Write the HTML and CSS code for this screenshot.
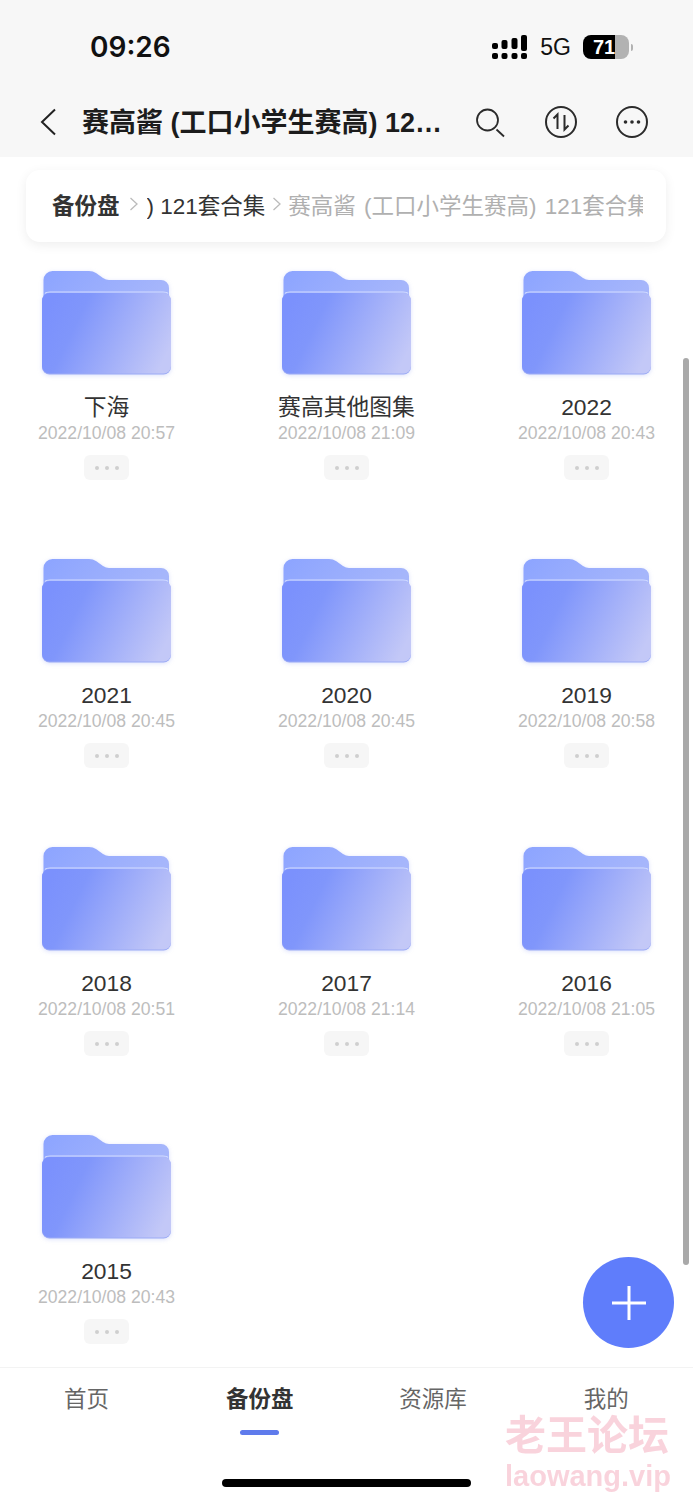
FILE: index.html
```html
<!DOCTYPE html>
<html lang="zh-CN">
<head>
  <meta charset="UTF-8">
  <meta name="viewport" content="width=device-width, initial-scale=1.0">
  <title>备份盘</title>
  <link rel="stylesheet" href="styles.css">
</head>
<body>
  <svg class="defs" width="0" height="0" aria-hidden="true">
    <defs>
      <linearGradient id="folderBack" x1="0" y1="0" x2="1" y2="0.3">
        <stop offset="0" stop-color="#8ca4ff"/>
        <stop offset="1" stop-color="#a6b6fb"/>
      </linearGradient>
      <linearGradient id="folderFront" x1="0" y1="0.35" x2="1" y2="0.65">
        <stop offset="0" stop-color="#7b91fd"/>
        <stop offset="0.25" stop-color="#8096fb"/>
        <stop offset="1" stop-color="#c3c8f7"/>
      </linearGradient>
      <symbol id="folder" viewBox="0 0 130 106">
        <path d="M1.500 9a9 9 0 0 1 9-9H47q4 0 7 2l7 5q3 2 6 2h52a8 8 0 0 1 8 8V40H1.500Z" fill="url(#folderBack)"/>
        <rect x="0" y="22.500" width="129" height="81" rx="7.500" fill="#9cabf5"/>
        <rect x="0" y="22" width="129" height="80.500" rx="7.500" fill="url(#folderFront)"/>
        <path d="M3 22.500Q4 21 8 21H121q4 0 5 1.500" fill="none" stroke="#d4dcff" stroke-width="1.200"/>
      </symbol>
    </defs>
  </svg>

  <div class="page">
    <header class="top">
      <div class="status">
        <span class="clock">09:26</span>
        <div class="status-right">
          <svg class="signal" width="36" height="24" viewBox="0 0 36 24">
            <g fill="#000">
              <rect x="0" y="8" width="6" height="6" rx="2"/>
              <rect x="9.500" y="5" width="6" height="9" rx="2"/>
              <rect x="19.500" y="3" width="6" height="11" rx="2"/>
              <rect x="29" y="0" width="6" height="16" rx="2"/>
              <rect x="0" y="18" width="6" height="6" rx="2"/>
              <rect x="9.500" y="18" width="6" height="6" rx="2"/>
              <rect x="19.500" y="18" width="6" height="6" rx="2"/>
              <rect x="29" y="18" width="6" height="6" rx="2"/>
            </g>
          </svg>
          <span class="net">5G</span>
          <div class="battery"><span>71</span></div>
          <i class="battery-nub"></i>
        </div>
      </div>
      <nav class="navbar">
        <svg class="back" width="18" height="28" viewBox="0 0 18 28">
          <path d="M16 1.500 3 14l13 12.500" fill="none" stroke="#222" stroke-width="2"/>
        </svg>
        <h1 class="title">赛高酱 (工口小学生赛高) 121套合集</h1>
        <div class="nav-icons">
          <svg width="32" height="32" viewBox="0 0 32 32">
            <circle cx="13.500" cy="14" r="10.500" fill="none" stroke="#2b2b2b" stroke-width="1.800"/>
            <path d="M22.500 23.500 30 30.500" stroke="#2b2b2b" stroke-width="1.800"/>
          </svg>
          <svg width="32" height="32" viewBox="0 0 32 32">
            <circle cx="16" cy="16" r="15" fill="none" stroke="#2b2b2b" stroke-width="2"/>
            <path d="M8.500 12.500 12.500 8.500V23M19.500 9V23.500L23.500 19.500" fill="none" stroke="#2b2b2b" stroke-width="2"/>
          </svg>
          <svg width="32" height="32" viewBox="0 0 32 32">
            <circle cx="16" cy="16" r="15" fill="none" stroke="#2b2b2b" stroke-width="2"/>
            <circle cx="9.500" cy="16" r="1.800" fill="#2b2b2b"/>
            <circle cx="16" cy="16" r="1.800" fill="#2b2b2b"/>
            <circle cx="22.500" cy="16" r="1.800" fill="#2b2b2b"/>
          </svg>
        </div>
      </nav>
    </header>

    <main class="content">
      <div class="crumbs">
        <span class="crumb-root">备份盘</span>
        <svg class="crumb-arrow first" width="10" height="16" viewBox="0 0 10 16">
          <path d="M1.500 2 8 8l-6.500 6" fill="none" stroke="#bbb" stroke-width="1.300"/>
        </svg>
        <div class="crumb-track">
          <span class="crumb-mid">) 121套合集</span>
          <svg class="crumb-arrow" width="10" height="16" viewBox="0 0 10 16">
            <path d="M1.500 2 8 8l-6.500 6" fill="none" stroke="#bbb" stroke-width="1.300"/>
          </svg>
          <span class="crumb-last">赛高酱 (工口小学生赛高) 121套合集</span>
        </div>
      </div>

      <div class="grid">
        <div class="cell">
          <svg class="folder"><use href="#folder"/></svg>
          <div class="name">下海</div>
          <div class="date">2022/10/08 20:57</div>
          <div class="more"><i></i><i></i><i></i></div>
        </div>
        <div class="cell">
          <svg class="folder"><use href="#folder"/></svg>
          <div class="name">赛高其他图集</div>
          <div class="date">2022/10/08 21:09</div>
          <div class="more"><i></i><i></i><i></i></div>
        </div>
        <div class="cell">
          <svg class="folder"><use href="#folder"/></svg>
          <div class="name">2022</div>
          <div class="date">2022/10/08 20:43</div>
          <div class="more"><i></i><i></i><i></i></div>
        </div>
        <div class="cell">
          <svg class="folder"><use href="#folder"/></svg>
          <div class="name">2021</div>
          <div class="date">2022/10/08 20:45</div>
          <div class="more"><i></i><i></i><i></i></div>
        </div>
        <div class="cell">
          <svg class="folder"><use href="#folder"/></svg>
          <div class="name">2020</div>
          <div class="date">2022/10/08 20:45</div>
          <div class="more"><i></i><i></i><i></i></div>
        </div>
        <div class="cell">
          <svg class="folder"><use href="#folder"/></svg>
          <div class="name">2019</div>
          <div class="date">2022/10/08 20:58</div>
          <div class="more"><i></i><i></i><i></i></div>
        </div>
        <div class="cell">
          <svg class="folder"><use href="#folder"/></svg>
          <div class="name">2018</div>
          <div class="date">2022/10/08 20:51</div>
          <div class="more"><i></i><i></i><i></i></div>
        </div>
        <div class="cell">
          <svg class="folder"><use href="#folder"/></svg>
          <div class="name">2017</div>
          <div class="date">2022/10/08 21:14</div>
          <div class="more"><i></i><i></i><i></i></div>
        </div>
        <div class="cell">
          <svg class="folder"><use href="#folder"/></svg>
          <div class="name">2016</div>
          <div class="date">2022/10/08 21:05</div>
          <div class="more"><i></i><i></i><i></i></div>
        </div>
        <div class="cell">
          <svg class="folder"><use href="#folder"/></svg>
          <div class="name">2015</div>
          <div class="date">2022/10/08 20:43</div>
          <div class="more"><i></i><i></i><i></i></div>
        </div>
      </div>
    </main>

    <footer class="tabbar">
      <div class="tabs">
        <div class="tab">首页</div>
        <div class="tab active">备份盘</div>
        <div class="tab">资源库</div>
        <div class="tab">我的</div>
      </div>
      <div class="home-bar"></div>
    </footer>

    <div class="scrollbar"></div>
    <button class="fab" type="button" aria-label="新建">
      <svg width="36" height="36" viewBox="0 0 36 36">
        <path d="M1 18H35M18 1V35" stroke="#fff" stroke-width="3"/>
      </svg>
    </button>
    <div class="watermark">
      <div class="wm-cn">老王论坛</div>
      <div class="wm-en">laowang.vip</div>
    </div>
  </div>
</body>
</html>
```

FILE: styles.css
```css
html, body { margin: 0; padding: 0; }
body {
  background-color: #ffffff;
  color: #222222;
  font-family: "Liberation Sans", "Noto Sans CJK SC", sans-serif;
}
.defs { position: absolute; }

.page {
  position: relative;
  display: flex;
  flex-direction: column;
  width: 693px;
  height: 1500px;
  overflow: hidden;
}

/* top area */
.top { flex: none; height: 157px; background-color: #f7f7f7; }
.status {
  display: flex;
  align-items: center;
  justify-content: space-between;
  height: 94px;
  padding: 0 60px 0 90px;
}
.clock { font-family: "Inter", sans-serif; font-size: 28px; font-weight: 600; color: #111111; }
.status-right { display: flex; align-items: center; }
.signal { margin-right: 12px; }
.net { font-size: 23px; color: #111111; margin-right: 12px; }
.battery {
  width: 46px;
  height: 24px;
  border-radius: 8px;
  background: linear-gradient(90deg, #000000 70%, #b2b2b2 70%);
  color: #ffffff;
  font-size: 20px;
  font-weight: 700;
  line-height: 24px;
  text-indent: 10px;
}
.battery-nub {
  width: 2px;
  height: 7px;
  margin-left: 2px;
  border-radius: 0 2px 2px 0;
  background-color: #b2b2b2;
}

.navbar {
  display: flex;
  align-items: center;
  height: 56px;
  padding-left: 39px;
}
.back { flex: none; margin-right: 25px; }
.title {
  width: 368px;
  margin: 0;
  padding-bottom: 4px;
  overflow: hidden;
  font-size: 27px;
  font-weight: 700;
  color: #1c1c1c;
  white-space: nowrap;
  text-overflow: ellipsis;
}
.nav-icons { display: flex; gap: 39px; margin-left: 24px; }

/* breadcrumb */
.content { flex: 1; min-height: 0; }
.crumbs {
  display: flex;
  align-items: center;
  width: 614px;
  height: 68px;
  margin: 13px 0 0 26px;
  padding: 0 0 4px 26px;
  border-radius: 14px;
  background-color: #ffffff;
  box-shadow: 0 3px 12px rgba(0, 0, 0, 0.07);
  font-size: 22.500px;
  white-space: nowrap;
}
.crumb-root { font-weight: 700; color: #333333; margin-right: 9px; }
.crumb-arrow { flex: none; margin: 0 6px 0 7px; }
.crumb-arrow.first { margin: 0 8px 0 0; }
.crumb-track {
  display: flex;
  align-items: center;
  width: 496px;
  overflow: hidden;
}
.crumb-mid { color: #333333; }
.crumb-last { color: #b0b0b0; word-spacing: 2px; flex: none; }

/* folders */
.grid {
  display: grid;
  grid-template-columns: repeat(3, 161px);
  grid-auto-rows: 288px;
  column-gap: 79px;
  margin-top: 29px;
  padding-left: 26px;
}
.cell { display: flex; flex-direction: column; align-items: center; }
.folder { width: 130px; height: 106px; margin-bottom: 15px; filter: drop-shadow(0 1px 2px rgba(110, 130, 240, 0.25)); }
.name { font-size: 22.800px; line-height: 30px; color: #333333; white-space: nowrap; }
.date { font-size: 17.600px; line-height: 22px; color: #bdbdbd; white-space: nowrap; }
.more {
  display: flex;
  align-items: center;
  justify-content: center;
  gap: 6px;
  width: 45px;
  height: 25px;
  margin-top: 11px;
  border-radius: 6px;
  background-color: #f6f6f6;
}
.more i { width: 4px; height: 4px; border-radius: 50%; background-color: #cfcfcf; }

/* bottom tabs */
.tabbar { flex: none; border-top: 1px solid #f3f3f3; }
.tabs { display: grid; grid-template-columns: repeat(4, 1fr); height: 111px; }
.tab {
  padding-top: 16px;
  font-size: 22.500px;
  line-height: 31px;
  color: #666666;
  text-align: center;
}
.tab.active { font-weight: 700; color: #333333; }
.tab.active::after {
  content: "";
  display: block;
  width: 39px;
  height: 5px;
  margin: 15px auto 0;
  border-radius: 3px;
  background-color: #5f7bec;
}
.home-bar {
  width: 249px;
  height: 8px;
  margin: 0 0 13px 222px;
  border-radius: 4px;
  background-color: #000000;
}

/* things over the page */
.scrollbar {
  position: absolute;
  top: 358px;
  left: 683px;
  width: 6px;
  height: 907px;
  border-radius: 3px;
  background-color: #a9a9a9;
}
.fab {
  position: absolute;
  top: 1257px;
  left: 583px;
  display: flex;
  align-items: center;
  justify-content: center;
  width: 91px;
  height: 91px;
  padding: 0;
  border: 0;
  border-radius: 50%;
  background-color: #5f7dfb;
}
.watermark {
  position: absolute;
  top: 1416px;
  left: 505px;
  font-weight: 700;
  color: #f4a9bb;
  opacity: 0.5;
  white-space: nowrap;
}
.wm-cn { font-size: 41px; line-height: 40px; }
.wm-en { font-size: 29px; line-height: 36px; margin-top: 2px; }
```
